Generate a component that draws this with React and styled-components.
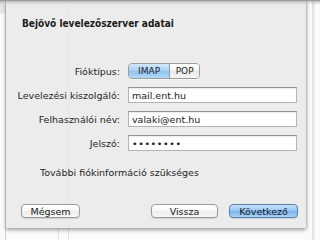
import React from "react";
import styled, { createGlobalStyle, css } from "styled-components";

const Global = createGlobalStyle`
  html, body { margin: 0; padding: 0; background: #fbfbfb; }
  body { font-family: "DejaVu Sans", "Liberation Sans", sans-serif; overflow: hidden; }
  * { box-sizing: border-box; }
`;

const Page = styled.div`
  width: 320px;
  height: 240px;
  display: flex;
  position: relative;
  overflow: hidden;
  background: #fbfbfb;
`;

const TopEdge = styled.div`
  position: absolute;
  left: 0;
  right: 0;
  top: 0;
  height: 5px;
  background: linear-gradient(#8e8e8e, rgba(150, 150, 150, 0.35) 40%, rgba(200, 200, 200, 0));
  z-index: 5;
  pointer-events: none;
`;

const LeftStrip = styled.div`
  width: 6px;
  background: linear-gradient(#e6e6e6 0, #e6e6e6 13px, #fbfbfb 14px);
  border-right: 1px solid #d0d0d0;
`;

const Middle = styled.div`
  width: 300px;
  display: flex;
  flex-direction: column;
`;

const RightStrip = styled.div`
  flex: 1;
  display: flex;
  padding-left: 6px;
`;

const VLine = styled.div`
  width: 3px;
  background: linear-gradient(90deg, #dedede, #eeeeee);
`;

const Sheet = styled.div`
  height: 228px;
  background: #ececec;
  display: flex;
  flex-direction: column;
  box-shadow: 0 2px 4px rgba(0, 0, 0, 0.35), 1px 0 2px rgba(0, 0, 0, 0.15);
  position: relative;
  z-index: 2;
  background-image: linear-gradient(90deg, transparent 63px, #e6e6e6 63px, #e6e6e6 64px, transparent 64px);
`;

const Below = styled.div`
  flex: 1;
  display: flex;
  padding-left: 52px;
  gap: 9px;
`;

const BgLine = styled.div`
  width: 1px;
  background: #e2e2e2;
`;

const Title = styled.div`
  margin: 18px 0 0 16px;
  font-family: "DejaVu Sans Condensed", "DejaVu Sans", sans-serif;
  font-size: 10px;
  font-weight: bold;
  color: #1a1a1a;
  line-height: 12px;
`;

const Form = styled.div`
  margin-top: 33px;
  display: grid;
  grid-template-columns: 114px 169px;
  column-gap: 8px;
  row-gap: 8px;
  grid-auto-rows: 16px;
  align-items: center;
`;

const Label = styled.div`
  text-align: right;
  font-size: 9.5px;
  color: #262626;
  white-space: nowrap;
`;

const Segmented = styled.div`
  display: flex;
  height: 16px;
  width: 72px;
  border: 1px solid #9c9c9c;
  border-radius: 4px;
  overflow: hidden;
  box-shadow: 0 1px 0 rgba(255, 255, 255, 0.6);
`;

const Segment = styled.div`
  flex: ${(p) => p.$grow};
  display: flex;
  align-items: center;
  justify-content: center;
  font-size: 9px;
  color: #1e1e1e;
  ${(p) =>
    p.$active
      ? css`
          background: linear-gradient(#d3e7fb, #a6cff5 50%, #90c3f2 51%, #b3d8f8);
          border-right: 1px solid #8a9fb8;
        `
      : css`
          background: linear-gradient(#ffffff, #f3f3f3 50%, #e9e9e9 51%, #f5f5f5);
        `}
`;

const Input = styled.div`
  height: 16px;
  background: #ffffff;
  border: 1px solid #b4b4b4;
  border-top-color: #8f8f8f;
  box-shadow: inset 0 1px 1px rgba(0, 0, 0, 0.08);
  font-size: 9.5px;
  color: #1a1a1a;
  padding-left: 3px;
  display: flex;
  align-items: center;
  white-space: nowrap;
  letter-spacing: ${(p) => (p.$secret ? "0.6px" : "0")};
`;

const Note = styled.div`
  margin: 16px 0 0 34px;
  font-size: 9.5px;
  color: #262626;
`;

const Spacer = styled.div`
  flex: 1;
`;

const Buttons = styled.div`
  display: flex;
  align-items: center;
  padding: 0 8px 10px 15px;
`;

const Button = styled.div`
  width: ${(p) => p.$w}px;
  height: 14px;
  margin-left: ${(p) => p.$ml || 0}px;
  border: 1px solid ${(p) => (p.$primary ? "#5a7fb0" : "#9a9a9a")};
  border-radius: 4px;
  display: flex;
  align-items: center;
  justify-content: center;
  font-size: 9.5px;
  color: #1a1a1a;
  box-shadow: 0 1px 1px rgba(0, 0, 0, 0.12);
  background: ${(p) =>
    p.$primary
      ? "linear-gradient(#c9e2fb, #93c4f3 50%, #7ab4ee 51%, #a7d1f8)"
      : "linear-gradient(#ffffff, #f6f6f6 50%, #ececec 51%, #f7f7f7)"};
`;

export default function App() {
  return (
    <>
      <Global />
      <Page>
        <TopEdge />
        <LeftStrip />
        <Middle>
          <Sheet>
            <Title>Bejövő levelezőszerver adatai</Title>
            <Form>
              <Label>Fióktípus:</Label>
              <Segmented>
                <Segment $active $grow={42}>IMAP</Segment>
                <Segment $grow={30}>POP</Segment>
              </Segmented>
              <Label>Levelezési kiszolgáló:</Label>
              <Input>mail.ent.hu</Input>
              <Label>Felhasználói név:</Label>
              <Input>valaki@ent.hu</Input>
              <Label>Jelszó:</Label>
              <Input $secret>••••••••</Input>
            </Form>
            <Note>További fiókinformáció szükséges</Note>
            <Spacer />
            <Buttons>
              <Button $w={59}>Mégsem</Button>
              <Spacer />
              <Button $w={67}>Vissza</Button>
              <Button $w={69} $ml={11} $primary>
                Következő
              </Button>
            </Buttons>
          </Sheet>
          <Below>
            <BgLine />
            <BgLine />
          </Below>
        </Middle>
        <RightStrip>
          <VLine />
        </RightStrip>
      </Page>
    </>
  );
}
